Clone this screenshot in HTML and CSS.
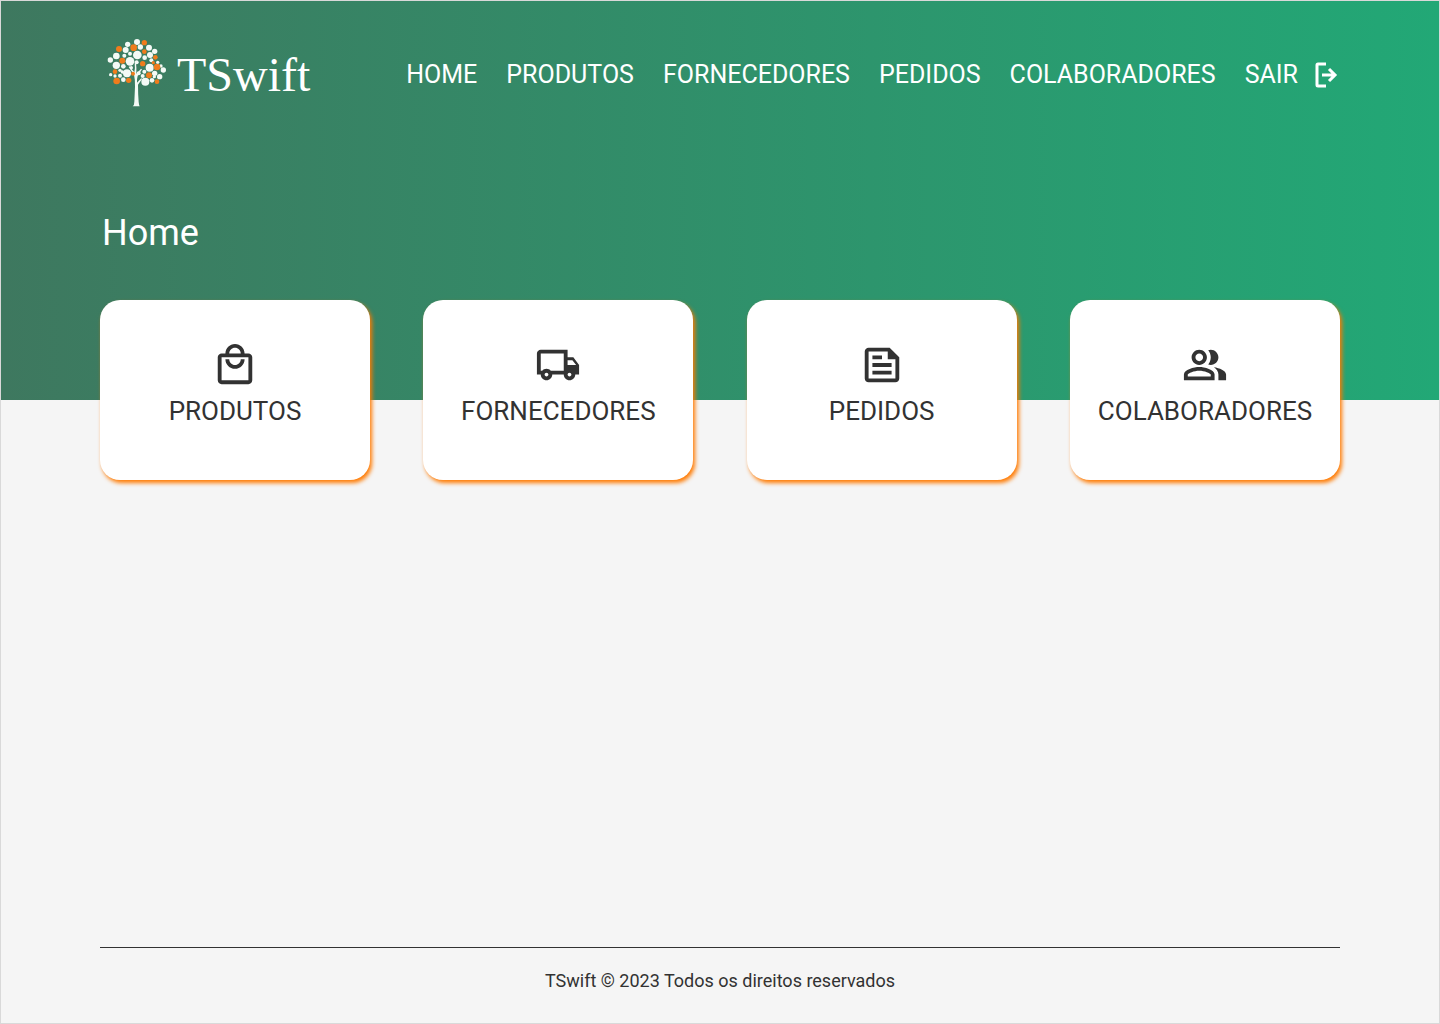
FILE: index.html
```
<!DOCTYPE html>
<html lang="pt-BR">
<head>
<meta charset="utf-8">
<meta name="viewport" content="width=device-width, initial-scale=1">
<title>TSwift - Home</title>
<link rel="stylesheet" href="styles.css">
</head>
<body>
<div class="page">
  <header class="hero">
    <div class="topbar">
      <a class="brand" href="#">
        <svg class="brand-tree" viewBox="0 0 225 240" aria-hidden="true">
          <path class="leaf" d="M98 223q5-3 5-14l2-45q1-20-3-36l-16-23 3-2 14 18q3-13 1-27l4-1q2 15 1 33l14-16 3 2-13 20q-3 10-2 20l13-14 2 3-12 17q0 28 2 52 1 10 3 13z"/>
          <g class="leaf">
            <circle cx="111" cy="30" r="9"/><circle cx="83" cy="37" r="8"/><circle cx="121" cy="45" r="8"/><circle cx="147" cy="47" r="9"/>
            <circle cx="77" cy="54" r="9"/><circle cx="164" cy="58" r="8"/><circle cx="49" cy="72" r="10"/><circle cx="73" cy="71" r="6"/>
            <circle cx="90" cy="65" r="6"/><circle cx="112" cy="69" r="13"/><circle cx="134" cy="77" r="7"/><circle cx="150" cy="69" r="9"/>
            <circle cx="31" cy="84" r="8"/><circle cx="90" cy="88" r="13"/><circle cx="154" cy="85" r="6"/><circle cx="49" cy="100" r="11"/>
            <circle cx="70" cy="103" r="7"/><circle cx="110" cy="91" r="6"/><circle cx="149" cy="107" r="12"/><circle cx="173" cy="91" r="5"/>
            <circle cx="183" cy="102" r="5"/><circle cx="190" cy="114" r="8"/><circle cx="94" cy="107" r="5"/><circle cx="60" cy="115" r="5"/>
            <circle cx="67" cy="120" r="5"/><circle cx="32" cy="128" r="5"/><circle cx="45" cy="132" r="5"/><circle cx="60" cy="131" r="6"/>
            <circle cx="81" cy="124" r="12"/><circle cx="133" cy="119" r="6"/><circle cx="164" cy="124" r="8"/><circle cx="179" cy="134" r="8"/>
            <circle cx="70" cy="143" r="7"/><circle cx="128" cy="132" r="6"/><circle cx="136" cy="149" r="12"/><circle cx="156" cy="145" r="7"/>
            <circle cx="163" cy="134" r="5"/><circle cx="116" cy="124" r="6"/>
          </g>
          <g class="fruit">
            <circle cx="133" cy="32" r="8"/><circle cx="57" cy="51" r="9"/><circle cx="101" cy="47" r="10"/><circle cx="133" cy="59" r="7"/>
            <circle cx="166" cy="76" r="7"/><circle cx="67" cy="86" r="9"/><circle cx="128" cy="95" r="8"/><circle cx="160" cy="92" r="5"/>
            <circle cx="171" cy="105" r="10"/><circle cx="45" cy="119" r="7"/><circle cx="99" cy="125" r="6"/><circle cx="147" cy="130" r="9"/>
            <circle cx="50" cy="147" r="10"/><circle cx="86" cy="145" r="8"/><circle cx="171" cy="149" r="7"/>
          </g>
        </svg>
        <span class="brand-name">TSwift</span>
      </a>
      <nav class="nav">
        <a href="#">HOME</a>
        <a href="#">PRODUTOS</a>
        <a href="#">FORNECEDORES</a>
        <a href="#">PEDIDOS</a>
        <a href="#">COLABORADORES</a>
        <a class="logout" href="#">SAIR
          <svg class="logout-icon" viewBox="0 0 24 26" aria-hidden="true"><path d="M12 2H4Q3 2 3 3v20q0 1 1 1h8M8 13h13M15 7l6 6-6 6"/></svg>
        </a>
      </nav>
    </div>
    <h1 class="title">Home</h1>
  </header>
  <main class="cards">
    <a class="card" href="#">
      <svg class="icon" viewBox="0 0 24 24" aria-hidden="true"><path d="M19 6h-2c0-2.76-2.24-5-5-5S7 3.24 7 6H5c-1.1 0-2 .9-2 2v12c0 1.1.9 2 2 2h14c1.1 0 2-.9 2-2V8c0-1.1-.9-2-2-2zm-7-3c1.66 0 3 1.34 3 3H9c0-1.66 1.34-3 3-3zm7 17H5V8h14v12zm-7-8c-1.66 0-3-1.34-3-3H7c0 2.76 2.24 5 5 5s5-2.24 5-5h-2c0 1.66-1.34 3-3 3z"/></svg>
      <span>PRODUTOS</span>
    </a>
    <a class="card" href="#">
      <svg class="icon" viewBox="0 0 24 24" aria-hidden="true"><path d="M20 8h-3V4H3c-1.1 0-2 .9-2 2v11h2c0 1.66 1.34 3 3 3s3-1.34 3-3h6c0 1.66 1.34 3 3 3s3-1.34 3-3h2v-5l-3-4zm-.5 1.5l1.96 2.5H17V9.5h2.5zM6 18c-.55 0-1-.45-1-1s.45-1 1-1 1 .45 1 1-.45 1-1 1zm2.22-3c-.55-.61-1.33-1-2.22-1s-1.67.39-2.22 1H3V6h12v9H8.22zM18 18c-.55 0-1-.45-1-1s.45-1 1-1 1 .45 1 1-.45 1-1 1z"/></svg>
      <span>FORNECEDORES</span>
    </a>
    <a class="card" href="#">
      <svg class="icon" viewBox="0 0 24 24" aria-hidden="true"><path d="M16 3H5c-1.1 0-2 .9-2 2v14c0 1.1.9 2 2 2h14c1.1 0 2-.9 2-2V8l-5-5zm3 16H5V5h10v4h4v10zM7 17h10v-2H7v2zM12 7H7v2h5V7zM7 13h10v-2H7v2z"/></svg>
      <span>PEDIDOS</span>
    </a>
    <a class="card" href="#">
      <svg class="icon" viewBox="0 0 24 24" aria-hidden="true"><path d="M16.67 13.13C18.04 14.06 19 15.32 19 17v3h4v-3c0-2.18-3.57-3.47-6.33-3.87zM15 12c2.21 0 4-1.79 4-4s-1.79-4-4-4c-.47 0-.91.1-1.33.24C14.5 5.27 15 6.58 15 8s-.5 2.73-1.33 3.76c.42.14.86.24 1.33.24zM9 12c2.21 0 4-1.79 4-4s-1.79-4-4-4-4 1.79-4 4 1.79 4 4 4zm0-6c1.1 0 2 .9 2 2s-.9 2-2 2-2-.9-2-2 .9-2 2-2zM9 13c-2.67 0-8 1.34-8 4v3h16v-3c0-2.66-5.33-4-8-4zm6 5H3v-.99C3.2 16.29 6.3 15 9 15s5.8 1.29 6 2v1z"/></svg>
      <span>COLABORADORES</span>
    </a>
  </main>
  <footer class="footer">TSwift © 2023 Todos os direitos reservados</footer>
</div>
</body>
</html>
```
FILE: styles.css
```
* {
  box-sizing: border-box;
}

body {
  margin: 0;
  font-family: Roboto, "Liberation Sans", sans-serif;
  color: #323232;
  background: #f5f5f5;
}

a {
  color: inherit;
  text-decoration: none;
}

.page {
  display: flex;
  flex-direction: column;
  min-height: 100vh;
  border: 1px solid #d9d9d9;
}

.hero {
  padding: 31px 101px 147px;
  color: #fff;
  background: linear-gradient(90deg, #3e785f, #22a876);
}

.topbar {
  display: flex;
  align-items: center;
  justify-content: space-between;
  margin-left: -2px;
}

.brand {
  display: flex;
  align-items: center;
  gap: 2px;
}

.brand-tree {
  width: 75px;
  height: 80px;
}

.brand-name {
  padding-top: 6px;
  font-family: "Liberation Serif", serif;
  font-size: 48px;
  line-height: 56px;
}

.leaf {
  fill: #f4faf6;
}

.fruit {
  fill: #f07c1c;
}

.nav {
  display: flex;
  align-items: center;
  gap: 29px;
  padding-top: 6px;
  font-size: 25px;
  line-height: 32px;
}

.logout {
  display: flex;
  align-items: center;
  gap: 16px;
}

.logout-icon {
  width: 24px;
  height: 26px;
  fill: none;
  stroke: #fff;
  stroke-width: 3;
}

.title {
  margin: 101px 0 0;
  font-size: 36px;
  font-weight: 400;
  line-height: 40px;
}

.cards {
  display: flex;
  justify-content: space-between;
  margin-top: -100px;
  padding: 0 99px;
}

.card {
  display: flex;
  flex-direction: column;
  align-items: center;
  gap: 7px;
  width: 270px;
  height: 180px;
  padding-top: 42px;
  border-radius: 20px;
  background: #fff;
  box-shadow: 2px 3px 4px #ff7a00;
  font-size: 26px;
  line-height: 32px;
}

.icon {
  width: 46px;
  height: 46px;
  fill: #323232;
}

.footer {
  margin: auto 99px 0;
  padding: 21px 0 30px;
  border-top: 1px solid #323232;
  font-size: 18px;
  line-height: 24px;
  text-align: center;
}
```
